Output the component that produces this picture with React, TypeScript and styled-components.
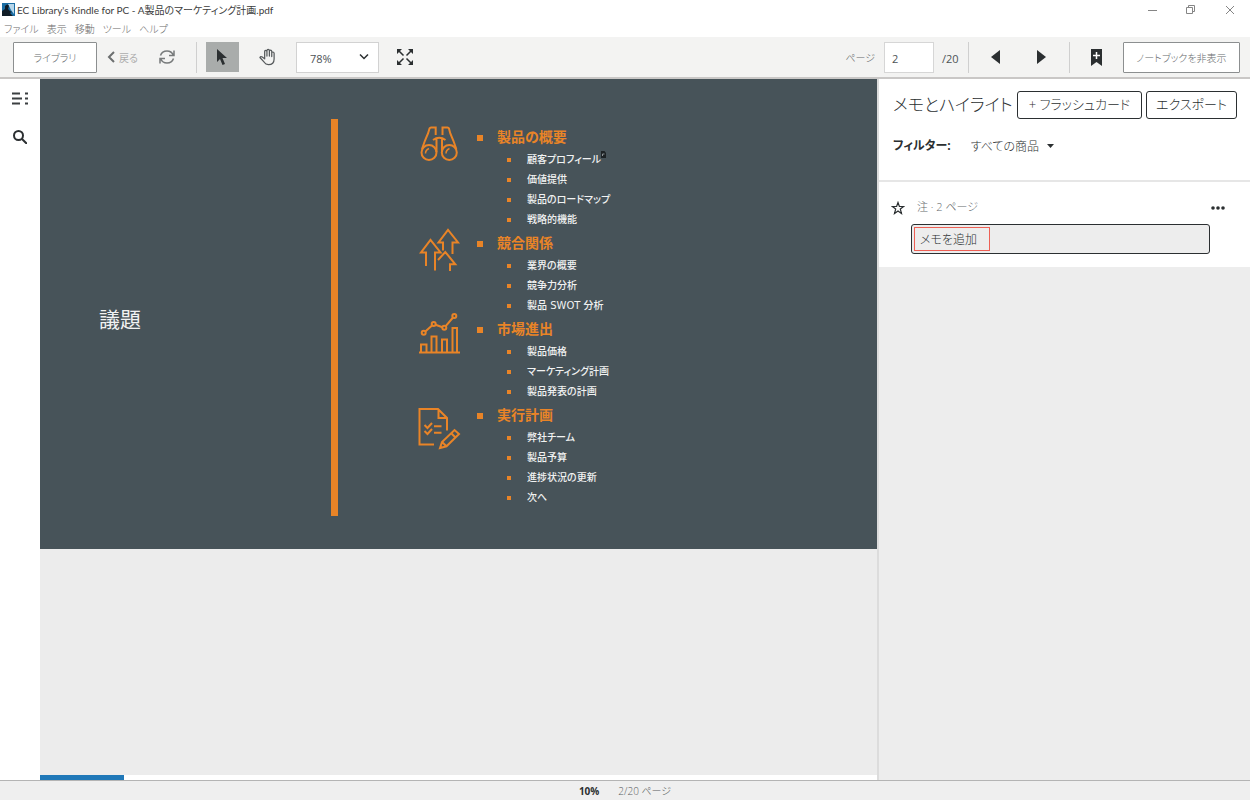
import React from "react";
import styled, { createGlobalStyle } from "styled-components";

const uiFont = `"Open Sans", "Noto Sans CJK JP", sans-serif`;
const slideFont = `"DejaVu Sans", "Noto Sans CJK JP", sans-serif`;
const ink = "#2b2f31";
const accent = "#e98427";

const GlobalStyle = createGlobalStyle`
  *, *::before, *::after { box-sizing: border-box; }
  body { margin: 0; font-family: ${uiFont}; color: ${ink}; background: #fff; }
  button, input, select { font-family: inherit; font-feature-settings: inherit; margin: 0; }
  button { cursor: pointer; padding: 0; }
  h1, h2, h3, ul, p { margin: 0; padding: 0; font-weight: 400; }
  ul { list-style: none; }
  svg { display: block; flex: none; }
`;

const Window = styled.div`
  display: flex;
  flex-direction: column;
  min-height: 100vh;
  font-feature-settings: "palt";
`;

const TitleBar = styled.header`
  display: flex;
  align-items: center;
  height: 19px;
  padding: 0 12px 0 2px;
  gap: 2px;
`;

const WindowTitle = styled.h1`
  flex: 1;
  font-family: Lato, "Noto Sans CJK JP", sans-serif;
  font-size: 10px;
  line-height: 18px;
  color: #3c3c3c;
`;

const CaptionButtons = styled.div`
  display: flex;
  gap: 23px;
`;

const CaptionButton = styled.button`
  display: grid;
  place-items: center;
  width: 16px;
  height: 18px;
  border: 0;
  background: none;
  color: #858585;
`;

const MenuBar = styled.nav`
  display: flex;
  gap: 8px;
  height: 18px;
  padding: 1px 4px 0;
`;

const MenuItem = styled.button`
  border: 0;
  background: none;
  font-size: 10px;
  font-weight: 300;
  line-height: 18px;
  color: #6a6a6a;
`;

const Toolbar = styled.div`
  display: flex;
  justify-content: space-between;
  height: 42px;
  padding: 0 10px 0 13px;
  background: #f3f3f2;
  border-bottom: 2px solid #c9c7c6;
`;

const ToolGroup = styled.div`
  display: flex;
  align-items: center;
`;

const OutlineButton = styled.button<{ $width: number }>`
  width: ${(p) => p.$width}px;
  height: 31px;
  border: 1px solid #8c8f90;
  border-radius: 1px;
  background: #fff;
  font-size: 10px;
  font-weight: 300;
  color: #666a6c;
`;

const BackButton = styled.button`
  display: flex;
  align-items: center;
  gap: 4px;
  margin-left: 10px;
  border: 0;
  background: none;
  font-size: 10px;
  color: #adadad;
`;

const IconButton = styled.button<{ $width: number; $active?: boolean }>`
  display: grid;
  place-items: center;
  width: ${(p) => p.$width}px;
  height: 30px;
  border: 0;
  background: ${(p) => (p.$active ? "#a9acab" : "none")};
  color: ${ink};
`;

const Divider = styled.span<{ $before: number; $after: number }>`
  width: 1px;
  height: 31px;
  margin: 0 ${(p) => p.$after}px 0 ${(p) => p.$before}px;
  background: #cfcfcf;
`;

const ZoomField = styled.label`
  display: grid;
  align-items: center;
  width: 83px;
  height: 31px;
  background: #fff;
  border: 1px solid #d2d2d2;

  > * { grid-area: 1 / 1; }
  > svg { justify-self: end; margin-right: 9px; pointer-events: none; }
`;

const ZoomSelect = styled.select`
  appearance: none;
  width: 100%;
  height: 29px;
  padding: 2px 0 0 13px;
  border: 0;
  background: none;
  font-size: 11px;
  color: #4e5356;
`;

const PageLabel = styled.label`
  display: flex;
  align-items: center;
  gap: 9px;
  font-size: 10px;
  font-weight: 300;
  color: #666a6c;
`;

const PageInput = styled.input`
  width: 50px;
  height: 31px;
  padding: 2px 7px 0;
  border: 1px solid #d6d6d6;
  background: #fff;
  font-size: 11px;
  color: #4e5356;
`;

const PageTotal = styled.span`
  width: 26px;
  padding: 2px 0 0 8px;
  font-size: 11px;
  color: #4e5356;
`;

const Workspace = styled.div`
  display: flex;
  flex: 1;
`;

const Rail = styled.nav`
  display: flex;
  flex-direction: column;
  align-items: center;
  gap: 9px;
  flex: none;
  width: 40px;
  padding-top: 4px;
  background: #fff;
`;

const Reader = styled.main`
  display: flex;
  flex-direction: column;
  flex: 1;
  min-width: 0;
  background: #ececec;
`;

const Slide = styled.article`
  display: grid;
  grid-template-columns: 291px 7px 1fr;
  align-items: center;
  padding: 40px 0 33px;
  background: #475359;
  font-family: ${slideFont};
`;

const SlideTitle = styled.h2`
  padding: 4px 0 0 59px;
  font-size: 21px;
  line-height: 30px;
  color: #f1f2f2;
`;

const SlideRule = styled.div`
  align-self: stretch;
  background: ${accent};
`;

const Agenda = styled.div`
  padding: 6px 0 7px 80px;
`;

const Section = styled.section`
  display: grid;
  grid-template-columns: 44px 1fr;
  gap: 15px;
  padding-bottom: 1px;
`;

const SectionArt = styled.svg`
  height: 52px;
  margin: -4px 0 -8px;
  fill: none;
  stroke: ${accent};
  stroke-width: 2;
`;

const Heading = styled.h3`
  display: flex;
  align-items: center;
  gap: 14px;
  font-size: 14px;
  font-weight: 700;
  line-height: 25px;
  color: ${accent};

  &::before { content: ""; width: 6px; height: 6px; background: ${accent}; }
`;

const Topic = styled.li`
  display: flex;
  align-items: center;
  gap: 16px;
  padding-left: 30px;
  font-size: 10px;
  font-weight: 500;
  line-height: 20px;
  color: #f1f2f2;

  &::before { content: ""; width: 4px; height: 4px; background: ${accent}; }
`;

const TopicText = styled.span`
  position: relative;
`;

const NoteMarker = styled.svg`
  position: absolute;
  top: 1px;
  left: 100%;
`;

const Progress = styled.div`
  height: 5px;
  margin-top: auto;
  background: #fff;
`;

const ProgressFill = styled.div`
  height: 100%;
  background: #2078b8;
`;

const Notebook = styled.aside`
  flex: none;
  width: 373px;
  border-left: 2px solid #dcdcdc;
  background: #ededed;
`;

const NotebookHead = styled.div`
  padding: 12px 13px 0 14px;
  height: 103px;
  background: #fff;
  border-bottom: 2px solid #e6e6e6;
`;

const HeadRow = styled.div`
  display: flex;
  align-items: center;
  gap: 4px;
`;

const NotebookTitle = styled.h2`
  flex: 1;
  font-size: 17px;
  font-weight: 300;
  line-height: 28px;
  color: ${ink};
  white-space: nowrap;
`;

const RoundButton = styled.button<{ $width: number }>`
  width: ${(p) => p.$width}px;
  height: 28px;
  padding-bottom: 2px;
  border: 1px solid ${ink};
  border-radius: 3px;
  background: #fff;
  font-size: 13px;
  font-weight: 300;
  line-height: 24px;
  color: ${ink};
`;

const FilterRow = styled.div`
  display: flex;
  align-items: center;
  gap: 20px;
  margin-top: 17px;
  font-size: 12px;
  line-height: 20px;
`;

const FilterLabel = styled.label`
  font-weight: 700;
`;

const FilterField = styled.span`
  display: flex;
  align-items: center;
  gap: 6px;
`;

const FilterSelect = styled.select`
  appearance: none;
  padding: 0;
  border: 0;
  background: none;
  font-size: 12px;
  font-weight: 300;
  color: ${ink};
`;

const NoteCard = styled.article`
  height: 85px;
  padding: 15px 25px 0 12px;
  background: #fff;
`;

const NoteHead = styled.div`
  display: flex;
  align-items: center;
  gap: 12px;
  height: 20px;
`;

const NoteMeta = styled.p`
  flex: 1;
  font-size: 11px;
  font-weight: 300;
  line-height: 20px;
  color: #666a6c;
`;

const PlainButton = styled.button`
  padding-top: 2px;
  border: 0;
  background: none;
  color: ${ink};
`;

const NoteField = styled.label`
  display: flex;
  align-items: center;
  height: 30px;
  margin: 7px 15px 0 20px;
  padding: 0 2px;
  border: 1px solid ${ink};
  border-radius: 3px;
  background: #ededed;
`;

const NoteInput = styled.input`
  width: 76px;
  height: 24px;
  padding: 0 5px;
  border: 1px solid #ee6055;
  background: none;
  font-size: 12px;
  font-weight: 300;
  color: ${ink};

  &::placeholder { color: ${ink}; opacity: 1; }
`;

const StatusBar = styled.footer`
  display: flex;
  justify-content: center;
  gap: 19px;
  height: 20px;
  border-top: 1px solid #b4b4b4;
  background: #efefef;
  font-size: 10px;
  font-weight: 300;
  line-height: 20px;
  color: #5a5e60;
`;

const Percent = styled.strong`
  font-weight: 700;
  color: ${ink};
`;

const menus = ["ファイル", "表示", "移動", "ツール", "ヘルプ"];

const Binoculars = () => (
  <SectionArt viewBox="0 0 44 52">
    <circle cx="11" cy="31.500" r="7.500" />
    <circle cx="31.300" cy="31.500" r="7.500" />
    <path d="M4 28 7 19.500 10 12.500 11.500 7.500Q12 6.500 13 6.500H17.700V14M38.300 28 35.300 19.500 32.300 12.500 31 7.500Q30.500 6.500 29.500 6.500H24.500V14M18.500 17V31M24 17V31M15 19Q21.300 14.500 27.500 19" />
    <path d="M7.500 32.500q0-3.500 3.500-5M28 32.500q0-3.500 3.500-5" strokeWidth="1.500" />
  </SectionArt>
);

const Arrows = () => (
  <SectionArt viewBox="0 0 44 52">
    <path d="M8 39V25.500H3L12.500 13 22.500 25.500H17V43.500" />
    <path d="M25 23.500V15.500H20.500L30 3 40 15.500H34.500V27" />
    <path d="M20 33 27.300 25 37.300 37.300H32V44" />
  </SectionArt>
);

const Chart = () => (
  <SectionArt viewBox="0 0 44 52">
    <path d="M1 39.500h41M3 39V31.500h5.500V39M13.500 39V23.500h5V39M24 39V26.500h5V39M34.500 39V15h4.500V39M7.300 18.500 14 12.500M17.500 11.700 24.500 14.200M27.700 13.200 35 4.500" />
    <circle cx="5.700" cy="19.700" r="2" />
    <circle cx="15.700" cy="11" r="2" />
    <circle cx="26.300" cy="14.700" r="2" />
    <circle cx="36.300" cy="3" r="2" />
  </SectionArt>
);

const Checklist = () => (
  <SectionArt viewBox="0 0 44 52">
    <path d="M16 45.500H1.500V10H20L29 19v12.500M20.500 10.500V19H29" />
    <path d="m6.500 26 3 3 4.500-5M6.500 32l3 3 4.500-5M16 27.300h7.500M16 33.700h7.500" />
    <path d="m22 49 2-6L36.500 31 41 35 28.500 47.300ZM24 43l4.500 4.300M33 34l4.500 4.500" />
  </SectionArt>
);

const agenda = [
  { art: Binoculars, title: "製品の概要", topics: ["顧客プロフィール", "価値提供", "製品のロードマップ", "戦略的機能"] },
  { art: Arrows, title: "競合関係", topics: ["業界の概要", "競争力分析", "製品 SWOT 分析"] },
  { art: Chart, title: "市場進出", topics: ["製品価格", "マーケティング計画", "製品発表の計画"] },
  { art: Checklist, title: "実行計画", topics: ["弊社チーム", "製品予算", "進捗状況の更新", "次へ"] },
];

const annotated = "顧客プロフィール";

export default function App() {
  const page = 2;
  const pages = 20;
  const progress = (page / pages) * 100;

  return (
    <Window>
      <GlobalStyle />
      <TitleBar>
        <svg width="13" height="13" viewBox="0 0 13 13">
          <path fill="#1c6ea4" d="M0 0h13v13H0z" />
          <path fill="#b7d6ea" d="M6 1h6v10L9 7Z" />
          <path fill="#111d27" d="M0 13V8l3-2 0-3q1-1.500 2.500-1.500Q7.500 2 6.500 4.500L6 6l2 2 2 1-2 1 3 3Z" />
        </svg>
        <WindowTitle>EC Library's Kindle for PC - A製品のマーケティング計画.pdf</WindowTitle>
        <CaptionButtons>
          <CaptionButton aria-label="最小化">
            <svg width="10" height="10" stroke="currentColor"><path d="M1 5.500h9" /></svg>
          </CaptionButton>
          <CaptionButton aria-label="元に戻す">
            <svg width="10" height="10" fill="none" stroke="currentColor"><path d="M.500 2.500h6v6h-6zM2.500 2V.500h6v6H7" /></svg>
          </CaptionButton>
          <CaptionButton aria-label="閉じる">
            <svg width="10" height="10" stroke="currentColor"><path d="m1 1 8 8M9 1 1 9" /></svg>
          </CaptionButton>
        </CaptionButtons>
      </TitleBar>
      <MenuBar>
        {menus.map((m) => <MenuItem key={m}>{m}</MenuItem>)}
      </MenuBar>

      <Toolbar>
        <ToolGroup>
          <OutlineButton $width={84}>ライブラリ</OutlineButton>
          <BackButton>
            <svg width="8" height="12" fill="none" stroke="#6c6f70" strokeWidth="2"><path d="M7 1 2 6l5 5" /></svg>
            戻る
          </BackButton>
          <IconButton $width={58} aria-label="同期">
            <svg width="16" height="16" fill="none" stroke="#777a7b" strokeWidth="1.500">
              <path d="M1.500 6.500Q3 2 8 2q4.500 0 6.200 4M15 1.500v5h-5M14.500 9.500q-1.500 4.500-6.500 4.500-4.500 0-6.200-4M1 14.500v-5h5" />
            </svg>
          </IconButton>
          <Divider $before={0} $after={9} />
          <IconButton $width={33} $active aria-label="選択">
            <svg width="12" height="16" fill={ink}><path d="M1 0v13l3-3 2.500 6 2.500-1-2.500-6H11Z" /></svg>
          </IconButton>
          <IconButton $width={57} aria-label="手のひら">
            <svg width="17" height="18" viewBox="-1 0 18 18" fill="none" stroke="#55595b" strokeWidth="1.300" strokeLinejoin="round" strokeLinecap="round">
              <path d="M5 11V3.500q0-1.500 1.200-1.500t1.200 1.500V8V2.500Q7.500 1 8.700 1T10 2.500V8V3q0-1.400 1.200-1.400T12.500 3v5.500V5q0-1.300 1.200-1.300T15 5v6q0 6-6 6-3 0-4.500-2.500L0 9.500Q.500 8 2.500 9Z" />
            </svg>
          </IconButton>
          <ZoomField>
            <ZoomSelect aria-label="ズーム" defaultValue="78%">
              <option>78%</option>
            </ZoomSelect>
            <svg width="10" height="8" fill="none" stroke={ink} strokeWidth="1.500"><path d="m1 1.500 4 4 4-4" /></svg>
          </ZoomField>
          <IconButton $width={53} aria-label="全画面">
            <svg width="16" height="16" fill={ink} stroke={ink} strokeWidth="1.500">
              <path d="m2 2 4.500 4.500M14 2 9.500 6.500M2 14l4.500-4.500M14 14 9.500 9.500" />
              <path stroke="none" d="M0 0h5L0 5ZM16 0v5l-5-5ZM0 16v-5l5 5ZM16 16h-5l5-5Z" />
            </svg>
          </IconButton>
        </ToolGroup>

        <ToolGroup>
          <PageLabel>
            ページ
            <PageInput defaultValue={page} />
          </PageLabel>
          <PageTotal>/{pages}</PageTotal>
          <Divider $before={8} $after={3} />
          <IconButton $width={46} aria-label="前のページ">
            <svg width="9" height="14" fill={ink}><path d="M9 0v14L0 7Z" /></svg>
          </IconButton>
          <IconButton $width={46} aria-label="次のページ">
            <svg width="9" height="14" fill={ink}><path d="M0 0v14l9-7Z" /></svg>
          </IconButton>
          <Divider $before={5} $after={0} />
          <IconButton $width={53} aria-label="ブックマーク">
            <svg width="11" height="17" fill={ink}>
              <path d="M0 0h11v17l-5.500-4L0 17Z" />
              <path stroke="#fff" strokeWidth="1.500" d="M5.500 3v7M2 6.500h7" />
            </svg>
          </IconButton>
          <OutlineButton $width={117}>ノートブックを非表示</OutlineButton>
        </ToolGroup>
      </Toolbar>

      <Workspace>
        <Rail>
          <IconButton $width={40} aria-label="目次">
            <svg width="16" height="13" stroke="#3b3f41" strokeWidth="2">
              <path d="M0 1.500h8M0 6.500h10M0 11.500h8M13 1.500h3M13 6.500h3M13 11.500h3" />
            </svg>
          </IconButton>
          <IconButton $width={40} aria-label="検索">
            <svg width="14" height="14" fill="none" stroke={ink} strokeWidth="2"><circle cx="5.500" cy="5.500" r="4.500" /><path d="m9 9 5 5" /></svg>
          </IconButton>
        </Rail>

        <Reader>
          <Slide>
            <SlideTitle>議題</SlideTitle>
            <SlideRule />
            <Agenda>
              {agenda.map(({ art: Art, title, topics }) => (
                <Section key={title}>
                  <Art />
                  <div>
                    <Heading>{title}</Heading>
                    <ul>
                      {topics.map((t) => (
                        <Topic key={t}>
                          <TopicText>
                            {t}
                            {t === annotated && (
                              <NoteMarker width="5" height="7"><path fill="#1d2224" d="M0 0h3.500L5 2v5H0Z" /><path stroke="#8b9194" d="M1.500 5V3h2" fill="none" /></NoteMarker>
                            )}
                          </TopicText>
                        </Topic>
                      ))}
                    </ul>
                  </div>
                </Section>
              ))}
            </Agenda>
          </Slide>
          <Progress role="progressbar" aria-valuenow={progress} aria-label="読書の進捗">
            <ProgressFill style={{ width: `${progress}%` }} />
          </Progress>
        </Reader>

        <Notebook>
          <NotebookHead>
            <HeadRow>
              <NotebookTitle>メモとハイライト</NotebookTitle>
              <RoundButton $width={125}>+ フラッシュカード</RoundButton>
              <RoundButton $width={91}>エクスポート</RoundButton>
            </HeadRow>
            <FilterRow>
              <FilterLabel htmlFor="filter">フィルター:</FilterLabel>
              <FilterField>
                <FilterSelect id="filter" defaultValue="all">
                  <option value="all">すべての商品</option>
                </FilterSelect>
                <svg width="7" height="4" fill={ink}><path d="M0 0h7L3.500 4Z" /></svg>
              </FilterField>
            </FilterRow>
          </NotebookHead>
          <NoteCard>
            <NoteHead>
              <PlainButton aria-label="お気に入り">
                <svg width="14" height="14" viewBox="0 0 14 14" fill="none" stroke={ink} strokeWidth="1.200">
                  <path d="m7 1.500 1.400 4h4.200L9.300 8l1.200 4.500L7 10l-3.500 2.500L4.700 8 1.400 5.500h4.200Z" />
                </svg>
              </PlainButton>
              <NoteMeta>注 · {page} ページ</NoteMeta>
              <PlainButton aria-label="その他">
                <svg width="15" height="4" fill={ink}><circle cx="3" cy="2" r="1.800" /><circle cx="8" cy="2" r="1.800" /><circle cx="13" cy="2" r="1.800" /></svg>
              </PlainButton>
            </NoteHead>
            <NoteField>
              <NoteInput aria-label="メモを追加" placeholder="メモを追加" />
            </NoteField>
          </NoteCard>
        </Notebook>
      </Workspace>

      <StatusBar>
        <Percent>{progress}%</Percent>
        <span>{page}/{pages} ページ</span>
      </StatusBar>
    </Window>
  );
}
